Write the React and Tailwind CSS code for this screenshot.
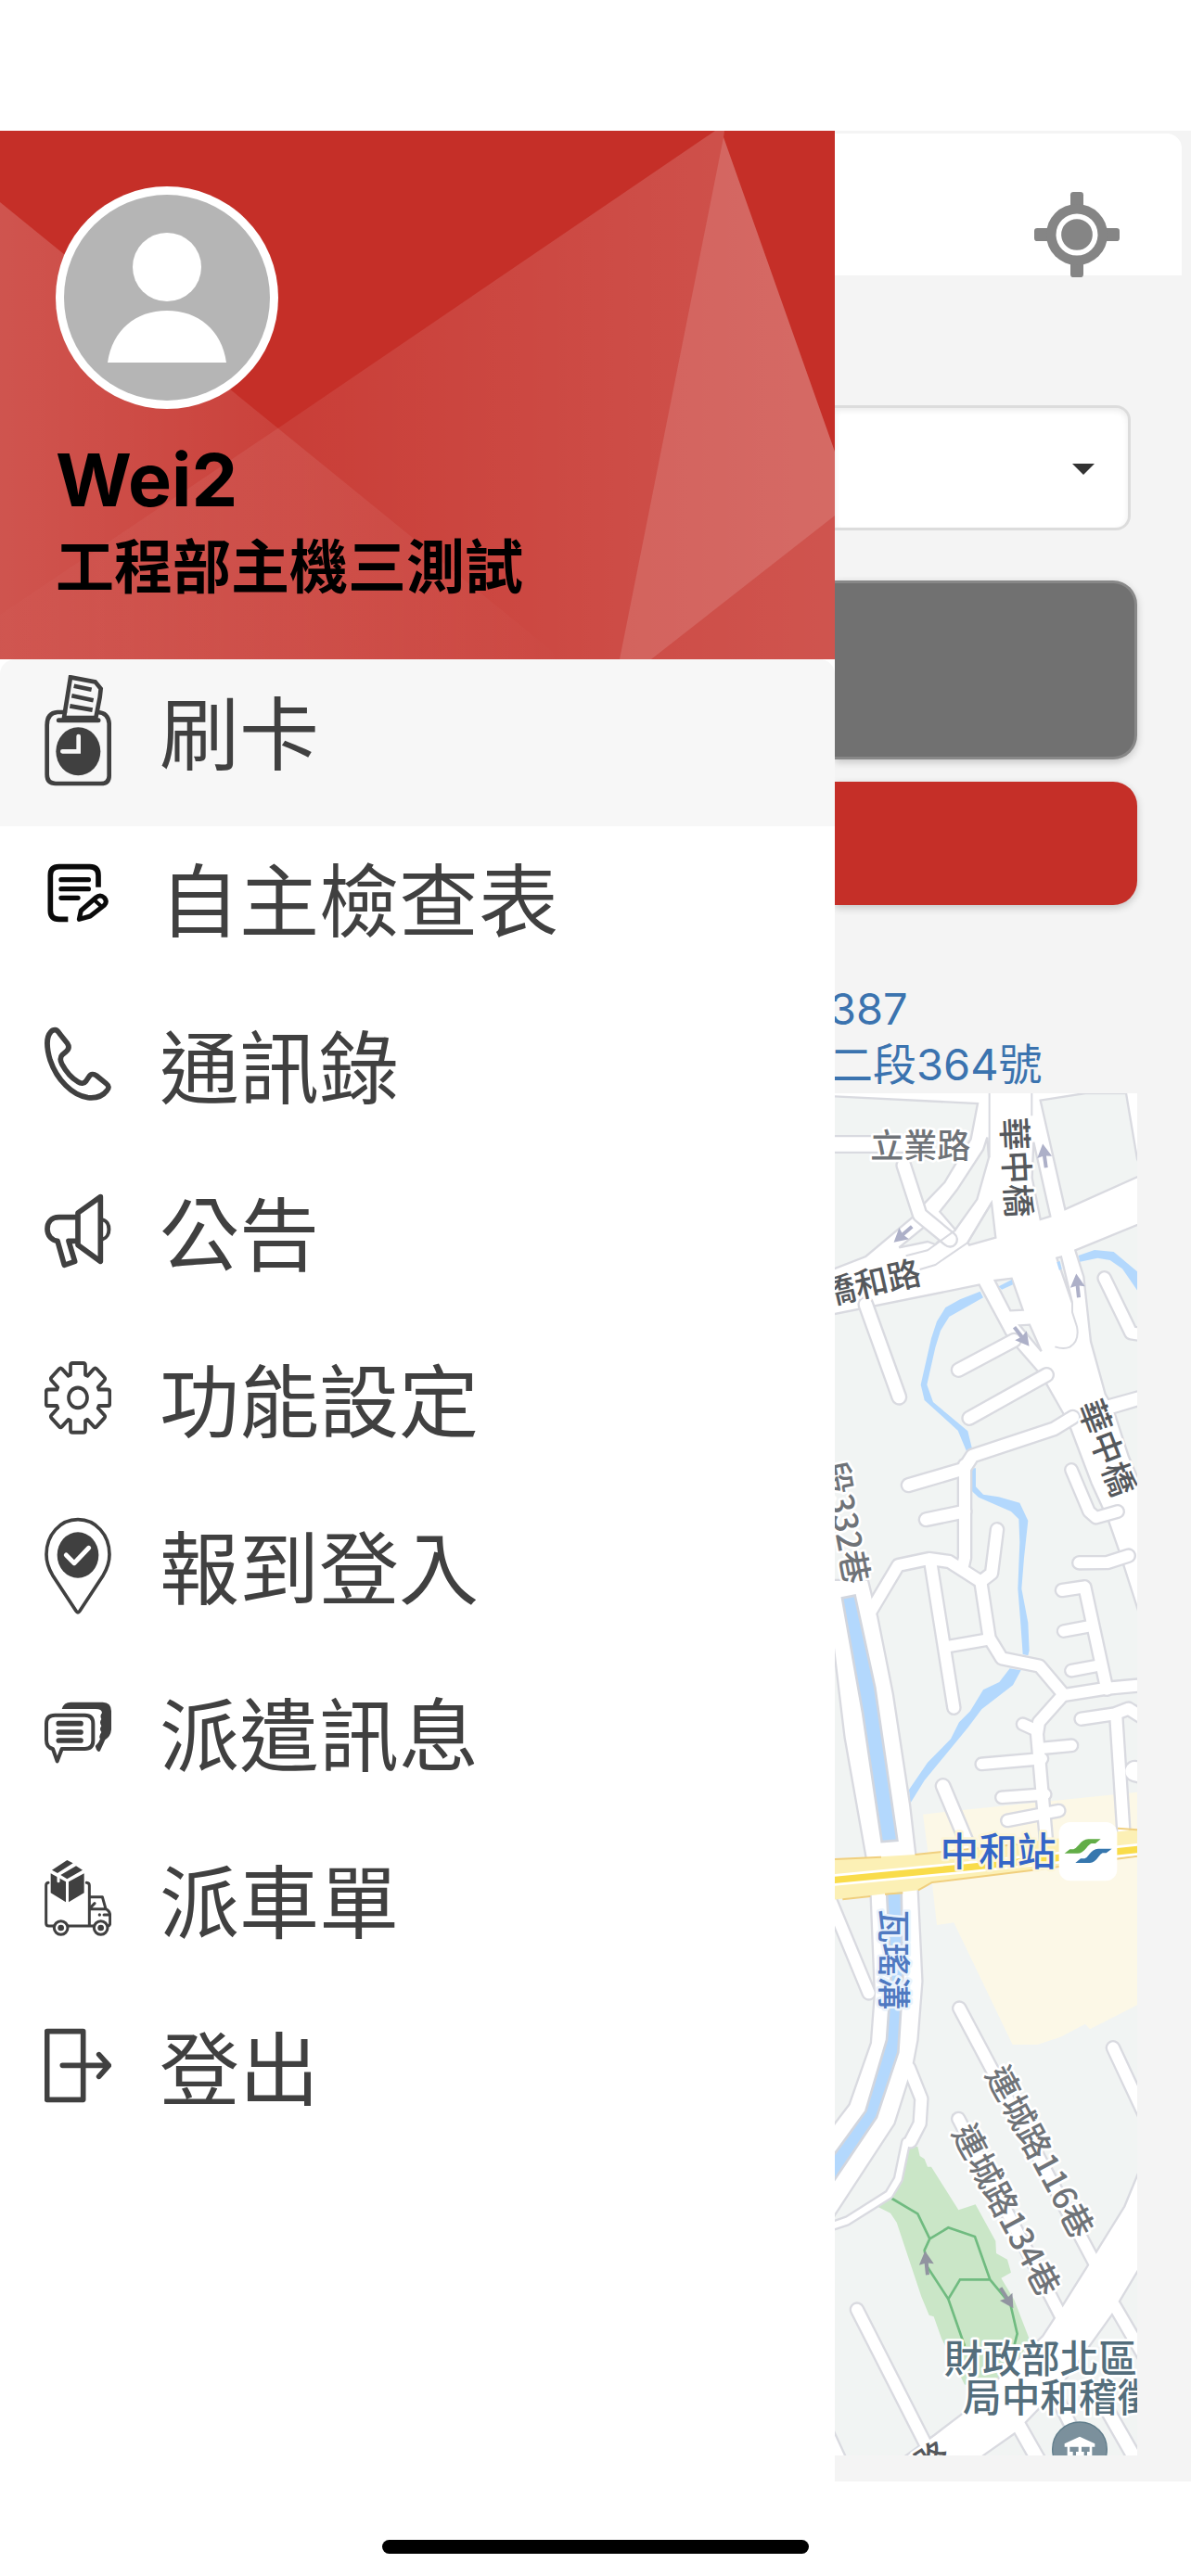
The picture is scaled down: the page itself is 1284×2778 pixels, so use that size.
import React from "react";

const INK = "#404040";

function MenuIcon({ children }) {
  return (
    <svg
      viewBox="0 0 216 360"
      className="h-[120px] w-[72px] shrink-0"
      fill="none"
      stroke={INK}
      strokeWidth="17"
      strokeLinecap="round"
      strokeLinejoin="round"
      aria-hidden="true"
    >
      {children}
    </svg>
  );
}

const PunchClockIcon = () => (
  <MenuIcon>
    <g strokeWidth="14">
      <path d="M66 120H42Q8 122 8 162V322Q8 351 36 351H182Q209 351 209 326V156Q206 122 172 120" />
      <path d="M84 7L164 22L182 44L179 72L166 138H63Z" strokeLinejoin="miter" />
      <path d="M95 35L152 47M88 67L158 82M82 100L155 113" strokeLinecap="butt" />
    </g>
    <path d="M46 146H174" strokeWidth="15" />
    <ellipse cx="109" cy="247" rx="72" ry="78" fill={INK} stroke="none" />
    <path d="M110 198V247H58" stroke="#f7f7f7" strokeWidth="14" strokeLinejoin="miter" />
  </MenuIcon>
);

const ChecklistIcon = () => (
  <MenuIcon>
    <g stroke="#0a0a0a">
      <path d="M174 146V108Q174 80 146 80H47Q19 80 19 108V222Q19 250 47 250H76" strokeWidth="17" strokeLinecap="butt" />
      <path d="M54 122H142M54 152H142M54 181H108" strokeWidth="16" />
      <path d="M112 250L118 222L166 180Q180 168 193 180Q204 192 194 204L148 240Z" strokeWidth="15" />
      <path d="M160 187L182 207" strokeWidth="12" />
    </g>
  </MenuIcon>
);

const PhoneIcon = () => (
  <MenuIcon>
    <path d="M34 68C42 68 46 76 50 82L74 112C80 121 79 130 70 138L58 148C50 156 50 166 56 178C70 204 90 225 108 236C118 243 128 242 134 234L144 219C150 209 160 210 168 216L199 241C209 249 209 256 202 264C190 280 168 290 140 287C90 280 40 230 18 165C6 125 6 90 20 75Q26 68 34 68Z" />
  </MenuIcon>
);

const MegaphoneIcon = () => (
  <MenuIcon>
    <path d="M181 68L108 120V224L181 277Z" />
    <path d="M106 134H47C20 134 9 152 9 172C9 195 24 209 42 211L64 289L98 277L78 211H106" />
    <path d="M188 142C215 148 215 198 188 205" strokeWidth="12" />
  </MenuIcon>
);

const GearIcon = () => (
  <MenuIcon>
    <g transform="translate(108 178) scale(1 1.09)" strokeWidth="11">
      <path d="M-24 -68V-96Q-24 -103 -17 -103H17Q24 -103 24 -96V-68L31 -65L51 -85Q56 -90 61 -85L85 -61Q90 -56 85 -51L65 -31L68 -24H96Q103 -24 103 -17V17Q103 24 96 24H68L65 31L85 51Q90 56 85 61L61 85Q56 90 51 85L31 65L24 68V96Q24 103 17 103H-17Q-24 103 -24 96V68L-31 65L-51 85Q-56 90 -61 85L-85 61Q-90 56 -85 51L-65 31L-68 24H-96Q-103 24 -103 17V-17Q-103 -24 -96 -24H-68L-65 -31L-85 -51Q-90 -56 -85 -61L-61 -85Q-56 -90 -51 -85L-31 -65Z" />
      <circle r="30" />
    </g>
  </MenuIcon>
);

const PinCheckIcon = () => (
  <MenuIcon>
    <path strokeWidth="11" d="M108 32C50 32 6 82 6 145C6 172 14 192 26 212L102 328Q108 337 114 328L190 212C202 192 210 172 210 145C210 82 166 32 108 32Z" />
    <ellipse cx="108" cy="147" rx="67" ry="74" fill={INK} stroke="none" />
    <path d="M70 147L96 173L143 124" stroke="#fff" strokeWidth="15" />
  </MenuIcon>
);

const MessagesIcon = () => (
  <MenuIcon>
    <path
      fill={INK}
      stroke="none"
      d="M56 105Q62 83 85 83H188Q216 84 216 112V172Q214 194 196 205L180 240Q175 247 168 236L164 225Q176 215 180 202Q174 195 184 180Q176 170 184 160Q176 148 184 138Q178 126 186 118Q186 105 165 105Z"
    />
    <path strokeWidth="12" d="M34 125H130Q157 125 157 152V208Q157 234 130 234H56L41 274L27 234Q6 230 6 205V152Q6 125 34 125Z" />
    <path d="M46 152H117M46 180H117M46 207H117" />
  </MenuIcon>
);

const TruckIcon = () => (
  <MenuIcon>
    <g strokeWidth="9">
      <path d="M12 127Q5 128 5 136V258Q5 267 14 267H30M76 267H158M136 127Q145 128 145 136V267" />
      <path d="M147 173H187L198 212Q212 218 212 235V258Q212 266 206 267M147 212H198M151 205L162 194" />
      <circle cx="53" cy="273" r="22" />
      <circle cx="182" cy="273" r="22" />
      <path d="M192 231H212" />
    </g>
    <g fill={INK} stroke="none">
      <circle cx="53" cy="273" r="10" />
      <circle cx="182" cy="273" r="10" />
      <circle cx="178" cy="231" r="5" />
      <path d="M20 97L69 124V190L20 160ZM78 124L128 97V160L78 190ZM24 86L73 54L92 64L42 96ZM52 102L102 73L123 86L73 115Z" />
    </g>
    <path d="M45 104V122" stroke="#fff" strokeWidth="9" />
  </MenuIcon>
);

const LogoutIcon = () => (
  <MenuIcon>
    <path d="M8 68H125V289H8Z" />
    <path d="M58 178H206M176 143L208 178L176 214" />
  </MenuIcon>
);

const MENU = [
  { label: "刷卡", Icon: PunchClockIcon, active: true },
  { label: "自主檢查表", Icon: ChecklistIcon },
  { label: "通訊錄", Icon: PhoneIcon },
  { label: "公告", Icon: MegaphoneIcon },
  { label: "功能設定", Icon: GearIcon },
  { label: "報到登入", Icon: PinCheckIcon },
  { label: "派遣訊息", Icon: MessagesIcon },
  { label: "派車單", Icon: TruckIcon },
  { label: "登出", Icon: LogoutIcon },
];

function HeaderBackdrop() {
  return (
    <svg viewBox="0 0 900 570" preserveAspectRatio="none" className="absolute inset-0 h-full w-full" aria-hidden="true">
      <defs>
        <linearGradient id="facetLeft" gradientUnits="userSpaceOnUse" x1="0" y1="0" x2="606" y2="0">
          <stop offset="0" stopColor="#fff" stopOpacity=".18" />
          <stop offset=".5" stopColor="#fff" stopOpacity=".09" />
          <stop offset="1" stopColor="#fff" stopOpacity="0" />
        </linearGradient>
        <linearGradient id="facetRight" gradientUnits="userSpaceOnUse" x1="0" y1="0" x2="900" y2="0">
          <stop offset="0" stopColor="#fff" stopOpacity=".01" />
          <stop offset=".33" stopColor="#fff" stopOpacity=".07" />
          <stop offset=".8" stopColor="#fff" stopOpacity=".15" />
          <stop offset="1" stopColor="#fff" stopOpacity=".18" />
        </linearGradient>
      </defs>
      <path d="M0 0H900V570H0Z" fill="#c52f28" />
      <path d="M0 77L606 570H0Z" fill="url(#facetLeft)" />
      <path d="M0 522L301 320L771 0H781L780 7L900 346V570H0Z" fill="url(#facetRight)" />
      <path d="M780 7L668 570H702L900 415V346Z" fill="#fff" fillOpacity=".13" />
    </svg>
  );
}

function Avatar() {
  return (
    <svg viewBox="0 0 240 240" className="size-60" role="img" aria-label="使用者頭像">
      <circle cx="120" cy="120" r="120" fill="#fff" />
      <circle cx="120" cy="120" r="111" fill="#b5b5b5" />
      <circle cx="120" cy="87" r="37" fill="#fff" />
      <path d="M56 190C61 155 86 134 120 134S179 155 184 190Z" fill="#fff" />
    </svg>
  );
}

/* Street map: drawing units are a third of a pixel. */
const LAND = [
  [-57, "M40 66L522 90L500 205L448 290L415 345L345 418L315 455L160 585L40 632Z"],
  [-57, "M553 200L540 240L455 370L400 440L450 498L520 400L558 265Z"],
  [-57, "M567 412L580 524L495 548L490 540Z"],
  [-57, "M268 556L360 481L405 527L385 546L360 537Z"],
  [-57, "M725 80L870 57H1002L1038 270L1060 318L805 432Z"],
  [-57, "M703 215L757 455L725 465L698 330Z"],
  [-57, "M838 565L1060 474V1015L945 1047L935 1030L888 860L865 650Z"],
  [-57, "M578 663L632 656L668 758L628 760Z"],
  [-57, "M658 808L690 806L728 892Z"],
  [-57, "M778 590L792 586L828 735Z"],
  [-57, "M965 1092L1060 1064V1350L1010 1230Z"],
  [-57, "M40 775L527 677L615 840L715 955L740 990L800 1095L820 1135L890 1320L945 1440L980 1540L1060 1790V4600H40Z"],
];

const WATER = [
  [-57, "M848 582L900 564L962 570L1045 640V705L990 625L950 597L910 590L853 602Z"],
  [-57, "M590 682L632 660L636 676L600 692Z"],
  [-57, "M778 604L788 600L794 625L786 630Z"],
  [-57, "M530 698L465 724L418 750L390 795L372 850L338 1000L350 1050L458 1148L486 1215H506L490 1150L378 1056L358 1000L385 880L402 825L430 780L540 718Z"],
  [1203, "M504 10V85L525 104L630 150L655 175L658 250L652 400L660 500L668 612L685 616L689 600L685 510L664 400L672 300L685 180L658 122L590 103L540 95L516 70V10Z"],
  [1203, "M626 658L592 702L540 727L498 796L462 832L435 886L360 962L300 1050L304 1094L350 1020L490 850L535 790L636 712L662 664Z"],
];

const ROADS = [
  [-57, "M20 222H285", 46],
  [-57, "M283 290L335 450L432 530", 40],
  [-57, "M160 740L268 1040", 40],
  [-57, "M460 952L640 856", 38],
  [-57, "M495 1108L745 968", 38],
  [-57, "M932 655L1018 832L1070 840", 36],
  [1203, "M298 65L478 12L505 -30L770 -118L830 -155", 38],
  [1203, "M480 0V300L472 335", 36],
  [1203, "M355 176L480 150", 38],
  [1203, "M175 475L265 324L365 303L430 312L532 377L567 350L585 208", 36],
  [1203, "M370 315L445 785", 36],
  [1203, "M425 587L562 563", 34],
  [1203, "M532 377L560 560L600 625L722 650L800 742L720 832L714 870L748 1260", 36],
  [1203, "M795 745L940 722L1070 710", 36],
  [1203, "M668 838L712 858", 34],
  [1203, "M720 917L826 907", 34],
  [1203, "M535 967L730 950", 34],
  [1203, "M600 1075L740 1065", 34],
  [1203, "M618 1150L785 1118", 34],
  [1203, "M410 1038L495 1240", 40],
  [1203, "M825 15L882 150L905 170L975 150", 34],
  [1203, "M850 316L942 315L1010 293", 36],
  [1203, "M795 405L868 394L940 725", 36],
  [1203, "M800 537L890 520", 34],
  [1203, "M825 665L915 648", 34],
  [1203, "M857 821L965 805L1010 788L1060 820", 36],
  [1203, "M970 815L995 1200", 36],
  [1203, "M1030 990L1070 1000", 60],
  [2463, "M30 110L170 448", 36],
  [2463, "M300 690L340 790L335 870L305 928", 36],
  [2463, "M290 930L265 1050L235 1100L100 1185L40 1205", 20],
  [2463, "M463 497L905 1330", 36],
  [2463, "M460 855L800 1510", 36],
  [2463, "M960 625L1070 860", 36],
  [3603, "M965 320L1070 500", 36],
  [3603, "M645 690L730 840", 42],
  [3603, "M780 620L840 740", 36],
  [3603, "M920 620L1040 830", 40],
  [3603, "M132 332L370 800", 36],
  [3603, "M20 690L85 830", 30],
];

const ROAD_AREAS = [
  [1203, "M30 375H165L180 437L195 490L245 740L300 1100L322 1290H168L95 880L60 590L30 400Z"],
  [2463, "M178 100L192 450L180 610L110 810L30 915V1210L60 1160L250 870L310 680L325 600L340 410L325 100Z"],
  [3603, "M1070 -170L1000 0L885 185L800 320L735 420L640 510L470 675L385 740L260 830H500L540 800L640 730L670 700L790 575L955 345L980 300L1070 150Z"],
];

const at = (dy) => "translate(0 " + dy + ")";

function Arrow({ x, y, turn, color = "#adb0c8" }) {
  return (
    <path
      transform={"translate(" + x + " " + y + ") rotate(" + turn + ")"}
      d="M0 -40L24 4L6 0V38H-6V0L-24 4Z"
      fill={color}
    />
  );
}

function MapLabel({ x, y, turn = 0, size = 108, color = "#6f7378", anchor = "middle", halo = "#fff", children }) {
  return (
    <text
      transform={"translate(" + x + " " + y + ") rotate(" + turn + ")"}
      textAnchor={anchor}
      dominantBaseline="central"
      fontSize={size}
      fontWeight="500"
      fill={color}
      stroke={halo}
      strokeWidth="16"
      strokeLinejoin="round"
      paintOrder="stroke"
    >
      {children}
    </text>
  );
}

function StreetMap() {
  return (
    <svg
      viewBox="60 0 978 4407"
      preserveAspectRatio="xMinYMin slice"
      className="block h-[1469px] w-full bg-white font-['Noto_Sans_CJK_TC',sans-serif]"
      role="img"
      aria-label="地圖"
    >
      {LAND.map(([dy, d]) => (
        <path key={d} transform={at(dy)} d={d} fill="#f1f4f3" stroke="#d9dae0" strokeWidth="7" />
      ))}
      <path transform={at(2463)} d="M345 -130L480 -145L1070 -205V470L885 565L870 548L790 590L715 615H635L445 220L390 228L375 95Z" fill="#fcf8e7" />
      {WATER.map(([dy, d]) => (
        <path key={d} transform={at(dy)} d={d} fill="#b3d8fd" />
      ))}

      <g transform={at(3603)}>
        <path d="M300 -195H328L335 -165L350 -155L360 -130H372L460 10L515 -8L580 110L582 150L618 170L630 212L598 230L640 300L690 430L620 560L480 575L405 425L380 355L365 350L340 290L260 50L240 20L200 0L235 -35L275 -90Z" fill="#cae6c7" />
        <path d="M235 -33L328 22L367 103L427 67L513 96L562 235H465L427 298M367 103L350 140L360 195L427 298L480 450M562 235L628 315L650 410L640 450" fill="none" stroke="#70bb80" strokeWidth="8" />
      </g>

      <g fill="none" stroke="#d9dae0" strokeLinecap="round" strokeLinejoin="round">
        {ROADS.map(([dy, d, w]) => (
          <path key={d} transform={at(dy)} d={d} strokeWidth={w + 14} />
        ))}
        {ROAD_AREAS.map(([dy, d]) => (
          <path key={d} transform={at(dy)} d={d} strokeWidth="14" />
        ))}
      </g>
      <g fill="none" stroke="#fff" strokeLinecap="round" strokeLinejoin="round">
        {ROADS.map(([dy, d, w]) => (
          <path key={d} transform={at(dy)} d={d} strokeWidth={w} />
        ))}
        {ROAD_AREAS.map(([dy, d]) => (
          <path key={d} transform={at(dy)} d={d} fill="#fff" stroke="none" />
        ))}
      </g>
      <g transform={at(-57)} fill="none" stroke="#d9dae0" strokeWidth="6">
        <path d="M560 57V265M697 57V130M828 735V765L843 812Q852 858 820 878Q800 886 772 877" />
        <path d="M567 410L490 540L385 612L335 627M450 500L360 565L290 583" />
      </g>

      <g fill="#b3d8fd" stroke="#d2d6de" strokeWidth="8">
        <path transform={at(1203)} d="M84 430L125 422L190 720L262 1214L212 1218L150 800Z" />
        <path transform={at(2463)} d="M228 115L242 400L228 600L160 830L40 995V1080L195 850L265 640L280 400L275 115Z" />
      </g>

      <g transform={at(2463)}>
        <path d="M40 17L320 0L1070 -85V-8L690 52L375 90L330 115L40 148Z" fill="#fcf0b5" />
        <path d="M60 15L210 8M320 0L700 -38M975 -85L1038 -80M85 145L175 135M222 128L280 124M330 115L375 90L690 52L1038 5" fill="none" stroke="#f0cf7e" strokeWidth="6" />
        <path d="M40 84L500 40L1070 -20" fill="none" stroke="#fff" strokeWidth="38" />
        <path d="M40 84L500 40L1070 -20" fill="none" stroke="#f9dc4a" strokeWidth="22" />
      </g>

      <g transform={at(-57)}>
        <Arrow x={738} y={260} turn={-8} />
        <Arrow x={845} y={680} turn={-6} />
        <Arrow x={281} y={513} turn={-131} />
        <Arrow x={664} y={844} turn={142} />
        <MapLabel x={337} y={219}>立業路</MapLabel>
        <MapLabel x={656} y={296} turn={87} color="#55585c">華中橋</MapLabel>
        <MapLabel x={176} y={662} turn={-13} color="#55585c">橋和路</MapLabel>
        <MapLabel x={948} y={1201} turn={69} color="#55585c">華中橋</MapLabel>
      </g>
      <g transform={at(1203)}>
        <MapLabel x={142} y={380} turn={79} anchor="end">段332巷</MapLabel>
        <MapLabel x={588} y={1243} size={125} color="#3465c8" halo="#fdf6d8">中和站</MapLabel>
        <rect x="785" y="1155" width="188" height="190" rx="36" fill="#fff" />
        <path d="M803 1256L820 1243H832Q840 1240 850 1228Q862 1211 880 1210H920L903 1224H890Q884 1226 874 1238Q860 1256 845 1256Z" fill="#62ad47" />
        <path d="M838 1287L855 1273H868Q876 1270 884 1258Q894 1243 912 1241H956L938 1255H926Q920 1257 912 1268Q900 1286 885 1287Z" fill="#3677ae" />
      </g>
      <g transform={at(2463)}>
        <MapLabel x={257} y={340} turn={90} color="#4f79c1" halo="#eaf3fc">瓦瑤溝</MapLabel>
        <MapLabel x={730} y={958} turn={62} size={107}>連城路116巷</MapLabel>
        <MapLabel x={622} y={1146} turn={62} size={107}>連城路134巷</MapLabel>
      </g>
      <g transform={at(3603)}>
        <Arrow x={356} y={182} turn={-6} color="#9194a0" />
        <Arrow x={616} y={294} turn={148} color="#9194a0" />
        <MapLabel x={413} y={483} size={125} color="#546e7c" anchor="start">財政部北區</MapLabel>
        <MapLabel x={474} y={609} size={125} color="#546e7c" anchor="start">局中和稽徵</MapLabel>
        <MapLabel x={370} y={808} turn={-33} color="#55585c">路</MapLabel>
        <circle cx="852" cy="784" r="88" fill="#7b909c" stroke="#607d8b" strokeWidth="4" />
        <path d="M803 766L852 743L901 766V776H892V830H812V776H803ZM820 776V792H830V830H840V792H848V776ZM858 776V792H866V830H876V792H884V776Z" fill="#fff" fillRule="evenodd" />
      </g>
    </svg>
  );
}

function LocateIcon() {
  return (
    <svg viewBox="0 0 276 276" className="size-[92px]" fill="#858585" aria-hidden="true">
      <rect x="117" y="0" width="42" height="276" rx="10" />
      <rect x="0" y="117" width="276" height="42" rx="10" />
      <circle cx="138" cy="138" r="99" />
      <circle cx="138" cy="138" r="59" fill="none" stroke="#fff" strokeWidth="17" />
    </svg>
  );
}

function Drawer() {
  return (
    <aside className="w-[900px] shrink-0 bg-white">
      <header className="relative h-[570px] overflow-hidden">
        <HeaderBackdrop />
        <div className="relative px-[60px] pt-[60px] font-bold text-black">
          <Avatar />
          <h1 className="mt-7 font-['Inter',sans-serif] text-[79px] leading-[96px]">Wei2</h1>
          <p className="text-[63px] leading-[84px]">工程部主機三測試</p>
        </div>
      </header>
      <nav aria-label="主選單">
        <ul>
          {MENU.map(({ label, Icon, active }) => (
            <li key={label}>
              <a
                href="#"
                aria-current={active ? "page" : undefined}
                className={
                  active
                    ? "flex h-[180px] items-start gap-[52px] rounded-t-2xl bg-[#f7f7f7] px-12 pt-[17px]"
                    : "flex h-[180px] items-start gap-[52px] px-12 pt-[17px]"
                }
              >
                <Icon />
                <span className="text-[86px] leading-[118px] text-[#404040]">{label}</span>
              </a>
            </li>
          ))}
        </ul>
      </nav>
    </aside>
  );
}

function PunchPage() {
  return (
    <main className="min-w-0 flex-1 overflow-hidden bg-[#f4f4f4] pt-[3px] pb-7">
      <div className="mr-2.5 flex h-[153px] items-end justify-end rounded-tr-2xl bg-white pr-[67px]">
        <button type="button" aria-label="定位" className="-mb-0.5">
          <LocateIcon />
        </button>
      </div>
      <div className="relative mt-[140px] mr-[65px]">
        <select
          aria-label="打卡地點"
          className="block h-[135px] w-full appearance-none rounded-r-2xl border-y-[3px] border-r-[3px] border-[#dcdcdc] bg-white shadow-[inset_0_3px_6px_rgba(0,0,0,0.08)]"
        />
        <svg viewBox="0 0 24 12" className="pointer-events-none absolute top-[63px] right-[39px] h-3 w-6" aria-hidden="true">
          <path d="M0 0H24L12 12Z" fill="#333" />
        </svg>
      </div>
      <div className="mt-[54px] mr-[58px] flex flex-col gap-6">
        <button
          type="button"
          aria-label="上班"
          className="h-[193px] rounded-r-[26px] border-y-[3px] border-r-[3px] border-[#888888] bg-[#717171] shadow-[0_3px_9px_rgba(0,0,0,0.2)]"
        />
        <button
          type="button"
          aria-label="下班"
          className="h-[133px] rounded-r-[26px] bg-[#c52f28] shadow-[0_3px_9px_rgba(0,0,0,0.2)]"
        />
      </div>
      <p className="mt-[82px] -ml-1.5 font-['Inter','Noto_Sans_CJK_TC',sans-serif] text-[47px] leading-[60px] whitespace-nowrap text-[#3b73af]">
        387
        <br />
        二段364號
      </p>
      <div className="mt-px mr-[58px]">
        <StreetMap />
      </div>
    </main>
  );
}

export default function App() {
  return (
    <div className="flex min-h-screen flex-col bg-white pt-[141px] font-['Noto_Sans_CJK_TC',sans-serif]">
      <div className="flex">
        <Drawer />
        <PunchPage />
      </div>
      <div className="mx-auto mt-[63px] h-[15px] w-[460px] rounded-full bg-black" />
    </div>
  );
}
